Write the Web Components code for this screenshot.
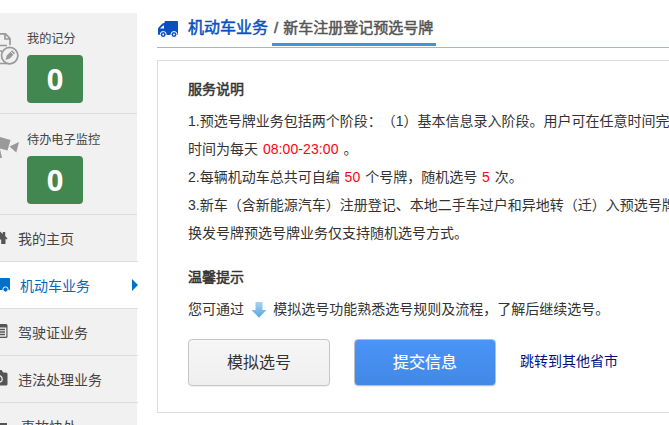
<!DOCTYPE html>
<html lang="zh-CN">
<head>
<meta charset="utf-8">
<title>机动车业务</title>
<style>
html,body{margin:0;height:425px;overflow:hidden;background:#fff}
body{font-family:"Liberation Sans","Noto Sans CJK SC",sans-serif;font-size:14px;color:#333;text-spacing-trim:space-all}
</style>
</head>
<body>
<app-shell>
  <side-bar slot="side">
    <stat-block label="我的记分" value="0" icon="score"></stat-block>
    <stat-block label="待办电子监控" value="0" icon="monitor"></stat-block>
    <nav-item icon="home">我的主页</nav-item>
    <nav-item icon="truck" active>机动车业务</nav-item>
    <nav-item icon="card">驾驶证业务</nav-item>
    <nav-item icon="camera">违法处理业务</nav-item>
    <nav-item icon="accident" class="wide">事故快处</nav-item>
  </side-bar>
  <page-title section="机动车业务">新车注册登记预选号牌</page-title>
  <info-panel>
    <text-block heading="服务说明">
      <div>1.预选号牌业务包括两个阶段：（1）基本信息录入阶段。用户可在任意时间完</div>
      <div>时间为每天 <red-text>08:00-23:00</red-text> 。</div>
      <div>2.每辆机动车总共可自编 <red-text>50</red-text> 个号牌，随机选号 <red-text>5</red-text> 次。</div>
      <div>3.新车（含新能源汽车）注册登记、本地二手车过户和异地转（迁）入预选号牌</div>
      <div>换发号牌预选号牌业务仅支持随机选号方式。</div>
    </text-block>
    <text-block heading="温馨提示">
      <div>您可通过 <down-arrow></down-arrow> 模拟选号功能熟悉选号规则及流程，了解后继续选号。</div>
    </text-block>
    <action-button slot="actions">模拟选号</action-button>
    <action-button slot="actions" primary>提交信息</action-button>
    <text-link slot="actions">跳转到其他省市</text-link>
  </info-panel>
</app-shell>
<script>
const icons = {
  score: `<svg width="19" height="34" viewBox="0 0 19 34" fill="none" stroke="#999" stroke-width="1.7"><path d="M-2 2.800H5.500L10 7.500V14M5 3V8H10M-2 14.500H7M-2 20H2M-2 32.500H10"/><circle cx="9.700" cy="24.600" r="8.200" fill="#f1f1f1"/><path d="M5.500 28.900L6.800 24.400 12 19.200 15 22.200 9.800 27.400Z" fill="#999" stroke="none"/><path d="M10.200 20.100L14 23.900" stroke="#f1f1f1" stroke-width="1"/></svg>`,
  monitor: `<svg width="19" height="34" viewBox="0 0 19 34" fill="#999"><path d="M0 5L10.500 8 7.500 18.500 0 16.500ZM9.500 14.500L19 10 16.300 20.500ZM0 17L2 26H0Z"/></svg>`,
  home: `<svg width="8" height="20" viewBox="0 0 8 20" fill="#555"><path d="M0 3.500L2.800 6V4H5.200V8L7.500 10.500 6.500 11.500 5.500 10.600V16H1.200V11.500H0Z"/></svg>`,
  truck: `<svg width="10" height="20" viewBox="0 0 10 20" fill="#0070c8"><path d="M0 3H9Q10 3 10 4V15H0Z"/><circle cx="5.500" cy="14.500" r="2.600" stroke="#fff" stroke-width="1"/></svg>`,
  card: `<svg width="8" height="20" viewBox="0 0 8 20"><path d="M0 2H6Q7.500 2 7.500 3.500V14.500Q7.500 16 6 16H0Z" fill="#555"/><path d="M0 5.500H6.300V14.700H0Z" fill="#f1f1f1"/><path d="M0 7.500H5M0 10H5M0 12.500H5" stroke="#555" stroke-width="1.300"/></svg>`,
  camera: `<svg width="8" height="20" viewBox="0 0 8 20"><path d="M0 1H1.500L3.300 3.500H6Q7.500 3.500 7.500 5V15Q7.500 16.500 6 16.500H0Z" fill="#555"/><circle cx="-1" cy="10" r="3.200" fill="none" stroke="#f1f1f1" stroke-width="1.200"/></svg>`,
  accident: `<svg width="8" height="20" viewBox="0 0 8 20" fill="#555"><path d="M0 7H7V18H0Z"/></svg>`
};
function define(name, render) {
  customElements.define(name, class extends HTMLElement {
    connectedCallback() {
      if (!this.shadowRoot) this.attachShadow({mode: 'open'}).innerHTML = render(this);
    }
  });
}
define('app-shell', () => `<style>
  :host{display:grid;grid-template-columns:138px minmax(0,1fr);column-gap:19px;width:669px;height:425px;overflow:hidden}
  main{min-width:0;padding-top:13px}
  </style><slot name="side"></slot><main><slot></slot></main>`);
define('side-bar', () => `<style>
  :host{display:block;margin-top:13px;width:137px;background:#f1f1f1;height:412px}
  </style><slot></slot>`);
define('stat-block', el => `<style>
  :host{display:grid;grid-template-columns:27px 1fr;box-sizing:border-box;height:101px;border-bottom:1px solid #ddd}
  .icon{padding-top:18px;height:34px}
  svg{display:block}
  .label{font-size:12.200px;line-height:18px;margin-top:17px;color:#444}
  .value{width:56px;height:48px;margin-top:7px;border-radius:4px;background:#41874f;color:#fff;font:bold 29px/48px "Open Sans",sans-serif;text-align:center}
  </style><div class="icon">${icons[el.getAttribute('icon')]}</div>
  <div><div class="label">${el.getAttribute('label')}</div><div class="value">${el.getAttribute('value')}</div></div>`);
define('nav-item', el => `<style>
  :host{display:flex;align-items:center;box-sizing:border-box;width:138px;height:47px;border-bottom:1px solid #ddd;color:#444;font-size:14px;line-height:20px;white-space:nowrap}
  :host([active]){background:#fff;color:#0068b7}
  .icon{width:18px;height:20px;flex:none}
  :host([active]) .icon{width:20px}
  :host(.wide) .icon{width:21px}
  svg{display:block}
  .text{padding-top:1px}
  .mark{display:none;margin-left:auto;border:solid transparent;border-width:6px 0 6px 6px;border-left-color:#0070c8}
  :host([active]) .mark{display:block}
  </style><span class="icon">${icons[el.getAttribute('icon')]}</span><span class="text"><slot></slot></span><i class="mark"></i>`);
define('page-title', el => `<style>
  :host{display:flex;align-items:flex-start;height:34px;border-bottom:1px solid #92b9e3;line-height:30px;white-space:nowrap;-webkit-text-stroke:.5px}
  svg{display:block;margin:8px 10px 0 1px;flex:none}
  .section{color:#0b50c0;font-size:16px;width:84px}
  .current{box-sizing:border-box;width:164px;height:33px;border-bottom:3px solid #4a90d9;padding-left:2px;color:#555;font-size:15px;word-spacing:1px}
  </style><svg width="20" height="17" viewBox="0 0 20 17" fill="#0b50c0"><path fill-rule="evenodd" d="M7.500 0H19Q20 0 20 1V13Q20 14 19 14H1Q0 14 0 13V8Q0 7 1 6L4 3Q5 2 6 2H6.500V1Q6.500 0 7.500 0ZM2 7.600H6V4.500H5.200Z"/><g stroke="#fff"><circle cx="5.200" cy="13.500" r="3"/><circle cx="16" cy="13.500" r="3"/></g><g fill="#fff"><circle cx="5.200" cy="13.500" r="1"/><circle cx="16" cy="13.500" r="1"/></g></svg>
  <span class="section">${el.getAttribute('section')}</span><span class="current">/ <slot></slot></span>`);
define('info-panel', () => `<style>
  :host{display:block;box-sizing:border-box;width:560px;height:353px;margin-top:12px;border:1px solid #ddd;padding:14px 0 0 30px;white-space:nowrap}
  .actions{display:flex;align-items:center;gap:24px;margin-top:16px}
  </style><slot></slot><div class="actions"><slot name="actions"></slot></div>`);
define('text-block', el => `<style>
  :host{display:block;line-height:28px;margin-bottom:16px;word-spacing:1px}
  h3{margin:0 0 4px;font-size:14px;line-height:28px;font-weight:normal;-webkit-text-stroke:.5px}
  </style><h3>${el.getAttribute('heading')}</h3><slot></slot>`);
define('red-text', () => `<style>:host{color:#ff0015;letter-spacing:.08px}</style><slot></slot>`);
define('down-arrow', () => `<style>
  :host{display:inline-block;width:16px;height:16px;margin:0 1.800px;vertical-align:-4px}
  svg{display:block}
  </style><svg width="16" height="16" viewBox="0 0 16 16"><defs><linearGradient id="g" x2="0" y2="1"><stop stop-color="#a5d5f3"/><stop offset="1" stop-color="#58a5dc"/></linearGradient></defs><path d="M4.500 0H11.500V8H15.500L8 15.800.5 8H4.500Z" fill="url(#g)"/></svg>`);
define('action-button', () => `<style>
  :host{display:block;box-sizing:border-box;width:142px;height:47px;border:1px solid #c5c5c5;border-radius:4px;background:linear-gradient(#f6f6f6,#efefef);box-shadow:0 1px 1px #0001;font-size:16px;line-height:45px;text-align:center;color:#333}
  :host([primary]){background:linear-gradient(#4a94f8,#4288e5);border-color:#b9bfc8;color:#fff;-webkit-text-stroke:.2px}
  </style><slot></slot>`);
define('text-link', () => `<style>
  :host{display:block;color:#00117f;line-height:20px;padding-bottom:4px}
  </style><slot></slot>`);
</script>
</body>
</html>
